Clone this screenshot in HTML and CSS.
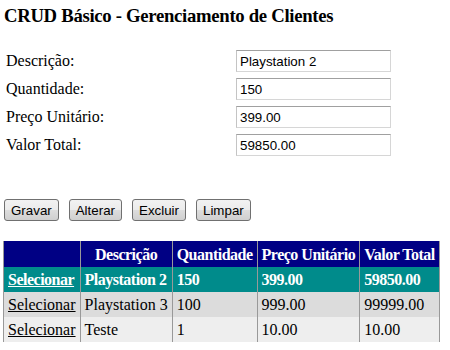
FILE: index.html
```html
<!DOCTYPE html>
<html lang="pt-BR">
<head>
    <meta charset="UTF-8">
    <title>CRUD Básico - Gerenciamento de Clientes</title>
    <link rel="stylesheet" href="styles.css">
</head>
<body>
    <h3 class="title">CRUD Básico - Gerenciamento de Clientes</h3>

    <div class="form">
        <label for="descricao">Descrição:</label>
        <input type="text" id="descricao" value="Playstation 2">
        <label for="quantidade">Quantidade:</label>
        <input type="text" id="quantidade" value="150">
        <label for="preco">Preço Unitário:</label>
        <input type="text" id="preco" value="399.00">
        <label for="total">Valor Total:</label>
        <input type="text" id="total" value="59850.00">
    </div>

    <div class="actions">
        <button>Gravar</button>
        <button>Alterar</button>
        <button>Excluir</button>
        <button>Limpar</button>
    </div>

    <table class="grid">
        <thead>
            <tr>
                <th>&nbsp;</th>
                <th>Descrição</th>
                <th>Quantidade</th>
                <th>Preço Unitário</th>
                <th>Valor Total</th>
            </tr>
        </thead>
        <tbody>
            <tr class="selected">
                <td><a href="#">Selecionar</a></td>
                <td>Playstation 2</td>
                <td>150</td>
                <td>399.00</td>
                <td>59850.00</td>
            </tr>
            <tr class="row">
                <td><a href="#">Selecionar</a></td>
                <td>Playstation 3</td>
                <td>100</td>
                <td>999.00</td>
                <td>99999.00</td>
            </tr>
            <tr class="alt">
                <td><a href="#">Selecionar</a></td>
                <td>Teste</td>
                <td>1</td>
                <td>10.00</td>
                <td>10.00</td>
            </tr>
        </tbody>
    </table>
</body>
</html>
```

FILE: styles.css
```css
body {
    margin: 0;
    padding: 0 4px;
    font-family: "Liberation Serif", "Times New Roman", serif;
    font-size: 16px;
    color: #000;
    background: #fff;
}

.title {
    margin: 5px 0 20px 0;
    font-size: 18.72px;
    font-weight: bold;
    letter-spacing: -0.3px;
}

.form {
    display: grid;
    grid-template-columns: 230px 155px;
    grid-auto-rows: 28px;
    align-items: center;
    padding-left: 2px;
}

.form input {
    height: 22px;
    box-sizing: border-box;
    padding: 1px 3px;
    font-family: "Liberation Sans", Arial, sans-serif;
    font-size: 13.33px;
    border: 1px solid #d6d6d6;
    border-top-color: #a0a0a0;
    border-left-color: #c4c4c4;
    background: #fff;
    color: #000;
}

.actions {
    display: flex;
    gap: 10px;
    margin-top: 40px;
    margin-bottom: 20px;
}

.actions button {
    height: 22px;
    padding: 0 6px;
    font-family: "Liberation Sans", Arial, sans-serif;
    font-size: 13.33px;
    color: #000;
    border: 1px solid #707070;
    border-radius: 3px;
    background: linear-gradient(#f2f2f2 0%, #ebebeb 50%, #dddddd 51%, #cfcfcf 100%);
}

.grid {
    border-collapse: collapse;
    margin-left: -1px;
}

.grid th,
.grid td {
    padding: 3px 4px;
    line-height: 19px;
    white-space: nowrap;
    text-align: left;
    border-left: 1px solid #999;
    border-right: 1px solid #999;
}

.grid th {
    background: #000084;
    color: #fff;
    font-weight: bold;
    text-align: center;
    padding-top: 4px;
    letter-spacing: -0.5px;
}

.grid a {
    color: inherit;
}

.selected {
    background: #008b8b;
    color: #fff;
    font-weight: bold;
    letter-spacing: -0.5px;
}

.row {
    background: #dcdcdc;
}

.alt {
    background: #eeeeee;
}
```
